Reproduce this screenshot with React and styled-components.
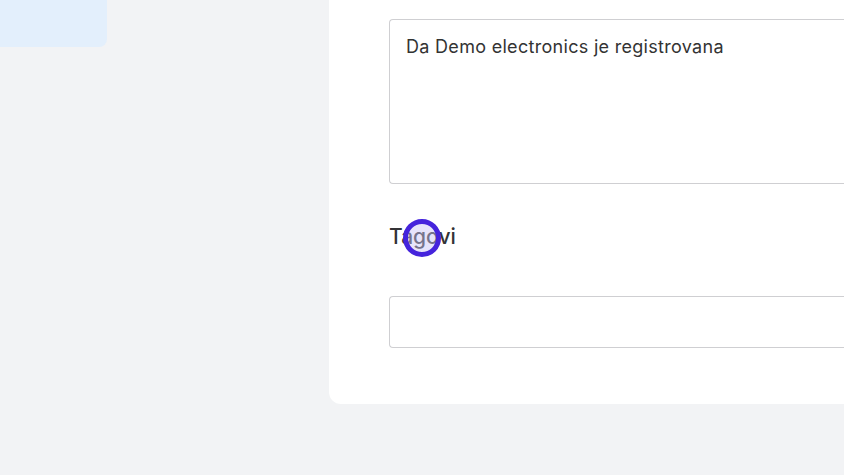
import React from 'react';
import styled, { createGlobalStyle } from 'styled-components';

const GlobalStyle = createGlobalStyle`
  html, body {
    margin: 0;
    padding: 0;
    background: #f2f3f5;
    font-family: Inter, "Noto Sans", sans-serif;
    overflow: hidden;
  }
`;

const Page = styled.div`
  width: 844px;
  height: 475px;
  display: flex;
  align-items: flex-start;
  background: #f2f3f5;
  overflow: hidden;
`;

const Sidebar = styled.aside`
  width: 329px;
  flex-shrink: 0;
`;

const SideItem = styled.div`
  width: 107px;
  height: 47px;
  background: #e3effc;
  border-radius: 0 0 8px 0;
`;

const Card = styled.main`
  flex: 1;
  min-width: 560px;
  margin-top: -20px;
  padding: 39px 0 56px 60px;
  background: #fff;
  border-radius: 0 0 0 12px;
  display: flex;
  flex-direction: column;
`;

const TextArea = styled.div`
  height: 165px;
  box-sizing: border-box;
  border: 1px solid #cfcfd2;
  border-right: none;
  border-radius: 4px 0 0 4px;
  padding: 14px 16px;
  font-size: 18px;
  letter-spacing: 0.3px;
  line-height: 26px;
  color: #333;
`;

const Label = styled.div`
  margin-top: 41px;
  position: relative;
  font-size: 21px;
  font-weight: 500;
  line-height: 24px;
  color: #333336;
`;

const Input = styled.div`
  margin-top: 47px;
  height: 52px;
  box-sizing: border-box;
  border: 1px solid #cfcfd2;
  border-right: none;
  border-radius: 4px 0 0 4px;
`;

const ClickMarker = styled.span`
  position: absolute;
  left: 14px;
  top: -6px;
  width: 38px;
  height: 38px;
  box-sizing: border-box;
  border: 5px solid #4524dc;
  border-radius: 50%;
  background: rgba(200, 195, 245, 0.45);
`;

export default function App() {
  return (
    <>
      <GlobalStyle />
      <Page>
        <Sidebar>
          <SideItem />
        </Sidebar>
        <Card>
          <TextArea>Da Demo electronics je registrovana</TextArea>
          <Label>
            Tagovi
            <ClickMarker />
          </Label>
          <Input />
        </Card>
      </Page>
    </>
  );
}
